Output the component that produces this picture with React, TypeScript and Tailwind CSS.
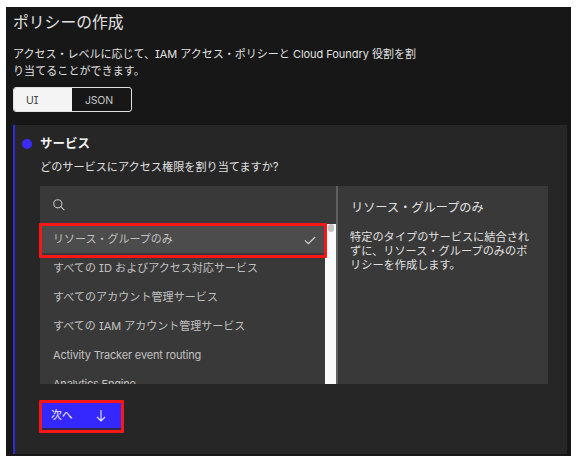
import React from "react";

const services = [
  { name: "すべての ID およびアクセス対応サービス", style: "tracking-[0.04px]" },
  { name: "すべてのアカウント管理サービス", style: "tracking-[0.08px]" },
  { name: "すべての IAM アカウント管理サービス", style: "tracking-normal" },
  { name: "Activity Tracker event routing", style: "tracking-[-0.16px]" },
  { name: "Analytics Engine", style: "tracking-[-0.22px]" },
];

function SearchIcon() {
  return (
    <svg width="12" height="12" viewBox="0 0 12 12" fill="none" stroke="#c0c0c0" strokeWidth="1.1">
      <circle cx="4.8" cy="4.8" r="4.1" />
      <path d="M7.7 7.7 11.4 11.2" />
    </svg>
  );
}

function CheckIcon() {
  return (
    <svg width="12" height="9" viewBox="0 0 12 9" fill="none" stroke="#d0d0d0" strokeWidth="1.2">
      <path d="M.9 4.4 4.3 7.7 11.2 1" />
    </svg>
  );
}

function ArrowDownIcon() {
  return (
    <svg width="10" height="12" viewBox="0 0 10 12" fill="none" stroke="#e8e8ff" strokeWidth="1.1">
      <path d="M5 0V11M1 7 5 11 9 7" />
    </svg>
  );
}

export default function App() {
  return (
    <div className="h-[467px] w-[584px] overflow-hidden bg-white pt-[7px] pl-[6px]">
      <main className="flex h-[449px] w-[565px] flex-col bg-[#171717] pl-[7px] font-['Inter','Noto_Sans_CJK_JP',sans-serif] text-[11px] whitespace-nowrap text-[#e0e0e0] [font-feature-settings:'cv08']">
        <h1 className="mt-[4px] h-6 text-[15.8px] leading-6">ポリシーの作成</h1>
        <p className="mt-[11px] h-[34px] text-[11px] leading-[17px]">
          アクセス・レベルに応じて、IAM アクセス・ポリシーと <span className="tracking-[-0.05px]">Cloud Foundry</span> 役割を割
          <br />
          <span className="tracking-[0.08px]">り当てることができます。</span>
        </p>
        <div className="mt-[7px] flex h-[25px] w-[119px] shrink-0 overflow-hidden rounded-[3px] border border-[#e0e0e0] text-[10.5px] leading-[24px]">
          <button className="w-[58px] bg-[#f4f4f4] pt-px pl-3 text-left text-[#404040]">UI</button>
          <button className="pt-px pl-[13px] text-left tracking-[-0.2px] text-[#c6c6c6]">JSON</button>
        </div>

        <section className="mt-[13px] h-[329px] w-[554px] shrink-0 border-l-2 border-[#2f2bd8] bg-[#262626] pl-[25px]">
          <header className="-ml-[18px] flex h-[38px] items-center gap-[8px]">
            <span className="size-[10px] rounded-full bg-[#3a2bff]" />
            <h2 className="text-[12.5px] leading-[18px] font-bold text-[#f4f4f4]">サービス</h2>
          </header>
          <p className="h-[23px] text-[11.15px] leading-[9px]">どのサービスにアクセス権限を割り当てますか?</p>

          <div className="flex h-[198px] w-[508px] bg-[#393939]">
            <div className="flex w-[296px] shrink-0 flex-col">
              <div className="flex h-[38px] shrink-0 items-center pl-[13px]">
                <SearchIcon />
              </div>
              <div className="flex h-[160px]">
                <div className="h-[160px] w-[285px] shrink-0 text-[#c1c1c1]">
                  <div className="relative z-10 -mt-px -ml-px flex h-[35px] w-[288px] items-center justify-between rounded-[1px] border-[3px] border-[#fa1616] bg-[#4c4c4c] pr-[8px] pl-[11px] shadow-[inset_0_-2px_#393939]">
                    <span className="-mt-[3px]">リソース・グループのみ</span>
                    <CheckIcon />
                  </div>
                  <ul className="-mt-[4px] h-[130px] overflow-hidden">
                    {services.map((service) => (
                      <li key={service.name} className="h-[29.1px] pl-[13px] leading-[29px]">
                        <span className={service.style}>{service.name}</span>
                      </li>
                    ))}
                  </ul>
                </div>
                <div className="flex w-[11px] shrink-0 justify-center bg-[#fafafa]">
                  <span className="h-2 w-[6px] rounded-full bg-[#c2c2c2]" />
                </div>
              </div>
            </div>
            <aside className="w-[212px] border-l-2 border-[#606060] pl-[12px]">
              <h3 className="mt-[13px] h-[18px] pl-px text-[12.2px] leading-[18px]">リソース・グループのみ</h3>
              <p className="mt-[12.5px] text-[11.2px] leading-[14.4px]">
                特定のタイプのサービスに結合され
                <br />
                ずに、リソース・グループのみのポ
                <br />
                リシーを作成します。
              </p>
            </aside>
          </div>

          <button className="mt-[16px] -ml-px flex h-[33px] w-[85px] items-center rounded-[1px] border-[3px] border-[#fa1616] bg-[#3528ff] pr-[15px] pb-[2px] pl-[9px] text-[#f4f4f4] shadow-[inset_0_-2px_#2c2850]">
            <span className="flex-1 pt-[2px] text-left text-[10.8px]">次へ</span>
            <ArrowDownIcon />
          </button>
        </section>
      </main>
    </div>
  );
}
